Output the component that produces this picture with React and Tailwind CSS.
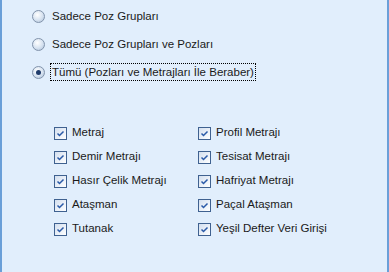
import React from 'react';

const radios = [
  { label: 'Sadece Poz Grupları', checked: false },
  { label: 'Sadece Poz Grupları ve Pozları', checked: false },
  { label: 'Tümü (Pozları ve Metrajları İle Beraber)', checked: true },
];

const leftChecks = ['Metraj', 'Demir Metrajı', 'Hasır Çelik Metrajı', 'Ataşman', 'Tutanak'];
const rightChecks = ['Profil Metrajı', 'Tesisat Metrajı', 'Hafriyat Metrajı', 'Paçal Ataşman', 'Yeşil Defter Veri Girişi'];

function Radio({ checked }) {
  return (
    <span className="relative flex h-[13px] w-[13px] shrink-0 items-center justify-center rounded-full border border-[#8193ab] bg-[radial-gradient(circle_at_40%_35%,#ffffff_0%,#d6e2f0_55%,#a9bdd6_100%)]">
      {checked && <span className="h-[5px] w-[5px] rounded-full bg-[#1f3b6b]" />}
    </span>
  );
}

function Check() {
  return (
    <span className="flex h-[13px] w-[13px] shrink-0 items-center justify-center border border-[#3f6190] bg-gradient-to-br from-[#d3dfef] to-[#ffffff]">
      <svg width="9" height="9" viewBox="0 0 9 9">
        <path d="M1.5 4.5 L3.5 6.5 L7.5 2.5" fill="none" stroke="#2a5aa8" strokeWidth="1.5" />
      </svg>
    </span>
  );
}

export default function App() {
  return (
    <div
      className="h-[272px] w-[389px] overflow-hidden border-x-2 border-[#6a9fd8] bg-[#e1eefc] text-[11.5px] text-[#1a1a1a]"
      style={{ fontFamily: '"Liberation Sans", Arial, sans-serif' }}
    >
      <div className="flex flex-col gap-[14px] pl-[30px] pt-[9px]">
        {radios.map((r) => (
          <div key={r.label} className="flex h-[14px] items-center gap-[5px]">
            <Radio checked={r.checked} />
            <span
              className={
                r.checked
                  ? 'border border-dotted border-black px-[1px] leading-[16px]'
                  : 'px-[2px] leading-[16px]'
              }
            >
              {r.label}
            </span>
          </div>
        ))}
      </div>

      <div className="mt-[47px] grid grid-cols-[144px_1fr] pl-[52px]">
        <div className="flex flex-col gap-[10px]">
          {leftChecks.map((c) => (
            <div key={c} className="flex h-[14px] items-center gap-[5px]">
              <Check />
              <span>{c}</span>
            </div>
          ))}
        </div>
        <div className="flex flex-col gap-[10px]">
          {rightChecks.map((c) => (
            <div key={c} className="flex h-[14px] items-center gap-[5px]">
              <Check />
              <span>{c}</span>
            </div>
          ))}
        </div>
      </div>

      <div className="mt-[32px] pl-[36px] leading-[16px] text-[#d0101a]">
        Not: Hesaplanan pozların metrajları da bu dosyaya aktarılır.
      </div>
    </div>
  );
}
